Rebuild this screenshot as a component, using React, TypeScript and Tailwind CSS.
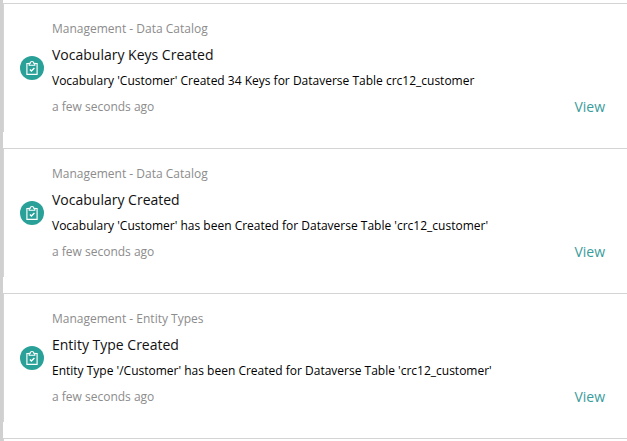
type Notification = {
  category: string;
  title: string;
  message: string;
  time: string;
};

const notifications: Notification[] = [
  {
    category: "Management - Data Catalog",
    title: "Vocabulary Keys Created",
    message: "Vocabulary 'Customer' Created 34 Keys for Dataverse Table crc12_customer",
    time: "a few seconds ago",
  },
  {
    category: "Management - Data Catalog",
    title: "Vocabulary Created",
    message: "Vocabulary 'Customer' has been Created for Dataverse Table 'crc12_customer'",
    time: "a few seconds ago",
  },
  {
    category: "Management - Entity Types",
    title: "Entity Type Created",
    message: "Entity Type '/Customer' has been Created for Dataverse Table 'crc12_customer'",
    time: "a few seconds ago",
  },
];

function ClipboardIcon() {
  return (
    <span className="flex size-6 shrink-0 items-center justify-center rounded-full bg-[#2aa198]">
      <svg width="14" height="16" viewBox="0 0 14 16" fill="none" stroke="#fff">
        <path d="M4 3.5H1.9V14.4H12.1V3.5H10" strokeWidth="1.15" />
        <path d="M4.2 5.2V3.2H5.3C5.3 0.9 8.7 0.9 8.7 3.2H9.8V5.2Z" strokeWidth="1.15" />
        <path d="M4.9 9.6L6.4 11.1L9.4 8" strokeWidth="1.4" />
      </svg>
    </span>
  );
}

function NotificationRow({ item }: { item: Notification }) {
  return (
    <li className="h-[145px] border-t border-[#d4d4d4]">
      <div className="flex h-[128px] items-center border-l border-[#d4d4d4] pl-4 pr-[22px]">
        <ClipboardIcon />
        <div className="ml-2 min-w-0 grow whitespace-nowrap leading-[26px]">
          <p className="text-[12px] text-[#8c8c8c]">{item.category}</p>
          <h2 className="text-[14px] text-[#111]">{item.title}</h2>
          <p className="text-[12px] text-black">{item.message}</p>
          <div className="flex justify-between">
            <span className="text-[12px] text-[#8c8c8c]">{item.time}</span>
            <a className="text-[14px] text-[#3a9c9c]">View</a>
          </div>
        </div>
      </div>
    </li>
  );
}

export default function App() {
  return (
    <div className="h-[441px] w-[627px] overflow-hidden border-l-[3px] border-[#d0d0d0] bg-white pt-[3px] font-['Open_Sans',sans-serif]">
      <ul>
        {notifications.map((item) => (
          <NotificationRow key={item.title} item={item} />
        ))}
      </ul>
      <div className="h-[3px] border-l border-t border-[#d4d4d4]" />
    </div>
  );
}
